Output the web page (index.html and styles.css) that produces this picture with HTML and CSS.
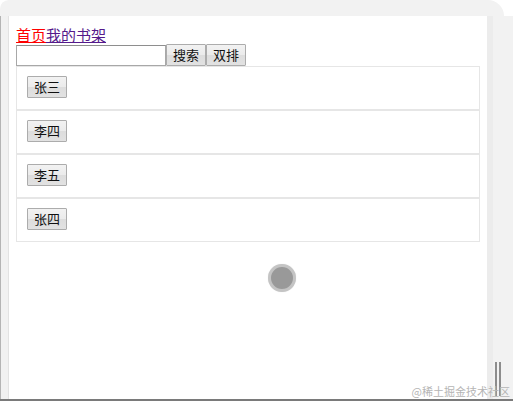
FILE: index.html
```html
<!DOCTYPE html>
<html lang="zh">
<head>
<meta charset="utf-8">
<title>书架</title>
<link rel="stylesheet" href="styles.css">
</head>
<body>
<div class="screen">
  <div class="topbar"></div>
  <div class="main">
    <div class="gutter"></div>
    <div class="page">
      <nav class="nav"><a class="nav-home" href="#">首页</a><a class="nav-shelf" href="#">我的书架</a></nav>
      <div class="search">
        <input class="search-input" type="text">
        <button class="btn">搜索</button><button class="btn">双排</button>
      </div>
      <ul class="list">
        <li class="item"><button class="btn">张三</button></li>
        <li class="item"><button class="btn">李四</button></li>
        <li class="item"><button class="btn">李五</button></li>
        <li class="item"><button class="btn">张四</button></li>
      </ul>
    </div>
    <div class="side"><div class="side-track"></div></div>
  </div>
  <div class="bottom-line"></div>
  <div class="touch"></div>
  <div class="grip"><span></span><span></span></div>
  <div class="watermark">@稀土掘金技术社区</div>
</div>
</body>
</html>
```
FILE: styles.css
```css
* { box-sizing: border-box; }
html, body { margin: 0; padding: 0; background: #fff; }
body {
  font-family: "Noto Sans CJK SC", "Noto Sans", sans-serif;
  width: 513px;
  height: 401px;
  overflow: hidden;
}
.screen {
  position: relative;
  width: 513px;
  height: 401px;
  display: flex;
  flex-direction: column;
}
.topbar {
  width: 504px;
  height: 16px;
  background: #f2f2f2;
  border-radius: 12px 22px 0 0;
  flex: none;
}
.main {
  flex: 1;
  display: flex;
  min-height: 0;
}
.gutter {
  width: 9px;
  background: #f1f1f1;
  border-left: 1px solid #b4b4b4;
  border-right: 1px solid #e2e2e2;
  flex: none;
}
.page {
  width: 478px;
  background: #fff;
  padding: 8px 7px 0 7px;
  flex: none;
}
.side {
  flex: 1;
  background: #f2f2f2;
  display: flex;
}
.side-track {
  width: 6px;
  background: #ececec;
}
.bottom-line {
  height: 2px;
  background: #7a7a7a;
  flex: none;
}
.nav {
  font-size: 15px;
  line-height: 21px;
  height: 21px;
}
.nav a { text-decoration: underline; }
.nav-home { color: #ff0000; }
.nav-shelf { color: #551a8b; }
.search {
  display: flex;
  align-items: flex-end;
  height: 21px;
}
.search-input {
  width: 150px;
  height: 21px;
  margin: 0;
  border: 1px solid #a8a8a8;
  border-top-color: #8e8e8e;
  background: #fff;
  padding: 0 2px;
}
.btn {
  width: 40px;
  height: 22px;
  margin: 0;
  padding: 0;
  font-family: "Noto Sans CJK SC", sans-serif;
  font-size: 13px;
  line-height: 20px;
  color: #111;
  border: 1px solid #acacac;
  border-radius: 1px;
  background: linear-gradient(#f2f2f2 0%, #ebebeb 50%, #dddddd 51%, #e2e2e2 100%);
}
.list {
  list-style: none;
  margin: 0;
  padding: 0;
  width: 464px;
}
.item {
  display: flex;
  align-items: flex-start;
  border: 1px solid #e6e6e6;
  padding: 9px 10px 0 10px;
  height: 44px;
}
.touch {
  position: absolute;
  left: 268px;
  top: 264px;
  width: 28px;
  height: 28px;
  border-radius: 50%;
  background: #999;
  border: 3px solid #c4c4c4;
  box-shadow: 0 0 1px #ddd;
}
.grip {
  position: absolute;
  left: 495px;
  top: 362px;
  display: flex;
  gap: 2px;
}
.grip span {
  width: 2px;
  height: 34px;
  background: #8c8c8c;
}
.watermark {
  position: absolute;
  right: 3px;
  top: 384px;
  font-size: 11px;
  line-height: 14px;
  color: #b5b5b5;
  font-family: "Noto Sans CJK SC", sans-serif;
}
```
